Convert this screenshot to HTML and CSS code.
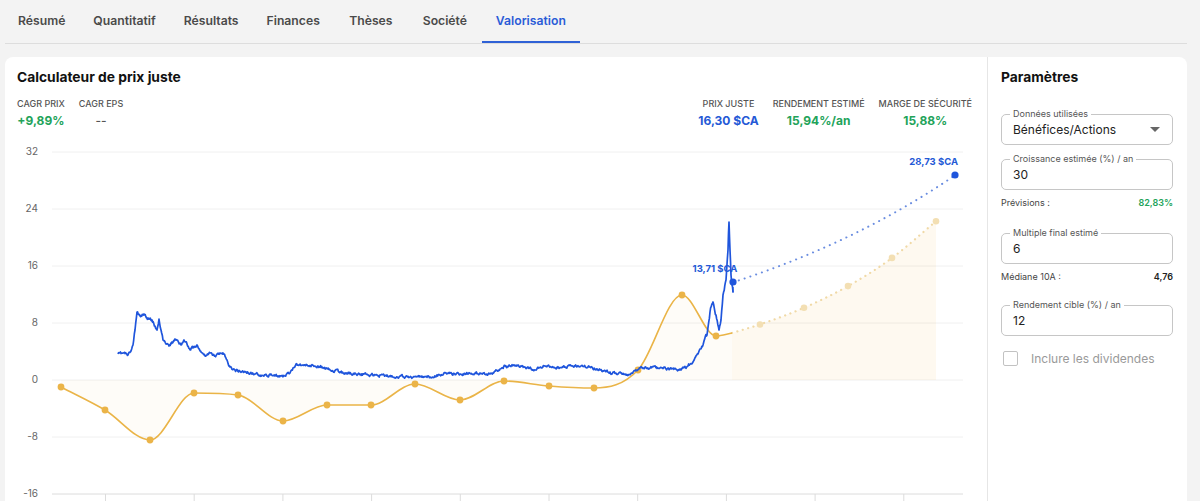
FILE: index.html
```html
<!DOCTYPE html>
<html>

<head>
    <title>Valorisation</title>
    <link rel="stylesheet" href="styles.css">
</head>

<body>
    <div class="page">
        <nav class="tabs">
            <a class="tab">Résumé</a>
            <a class="tab">Quantitatif</a>
            <a class="tab">Résultats</a>
            <a class="tab">Finances</a>
            <a class="tab">Thèses</a>
            <a class="tab">Société</a>
            <a class="tab active">Valorisation</a>
        </nav>

        <div class="card">
            <!-- Calculator + chart -->
            <section class="calc">
                <h2 class="title">Calculateur de prix juste</h2>

                <div class="stats">
                    <div class="stat-group">
                        <div class="stat">
                            <div class="stat-label">CAGR PRIX</div>
                            <div class="stat-value green">+9,89%</div>
                        </div>
                        <div class="stat">
                            <div class="stat-label">CAGR EPS</div>
                            <div class="stat-value muted">--</div>
                        </div>
                    </div>
                    <div class="stat-group">
                        <div class="stat">
                            <div class="stat-label">PRIX JUSTE</div>
                            <div class="stat-value blue">16,30 $CA</div>
                        </div>
                        <div class="stat">
                            <div class="stat-label">RENDEMENT ESTIMÉ</div>
                            <div class="stat-value green">15,94%/an</div>
                        </div>
                        <div class="stat">
                            <div class="stat-label">MARGE DE SÉCURITÉ</div>
                            <div class="stat-value green">15,88%</div>
                        </div>
                    </div>
                </div>

                <svg class="chart" width="955" height="370" viewBox="17 140 955 370">
                    <g class="grid">
                        <line x1="52" x2="963" y1="152" y2="152" />
                        <line x1="52" x2="963" y1="209" y2="209" />
                        <line x1="52" x2="963" y1="266" y2="266" />
                        <line x1="52" x2="963" y1="323" y2="323" />
                        <line x1="52" x2="963" y1="380" y2="380" />
                        <line x1="52" x2="963" y1="437" y2="437" />
                    </g>
                    <g class="axis-labels">
                        <text x="38" y="152">32</text>
                        <text x="38" y="209">24</text>
                        <text x="38" y="266">16</text>
                        <text x="38" y="323">8</text>
                        <text x="38" y="380">0</text>
                        <text x="38" y="437">-8</text>
                        <text x="38" y="494">-16</text>
                    </g>
                    <g class="x-axis" id="xAxis">
                        <line x1="52" x2="963" y1="494" y2="494" />
                    </g>

                    <path id="orangeArea" class="orange-area" />
                    <path id="projArea" class="proj-area" />
                    <path id="projLine" class="proj-line" />
                    <g id="projDots" class="proj-dots"></g>

                    <path id="orangeLine" class="orange-line" />
                    <g id="orangeDots" class="orange-dots"></g>

                    <path id="blueLine" class="blue-line" />
                    <path id="blueProj" class="blue-proj" />
                    <line class="blue-tick" x1="733" x2="733" y1="287" y2="293" />
                    <circle class="blue-dot" cx="733" cy="282" r="3.6" />
                    <circle class="blue-dot" cx="955" cy="175" r="3.6" />
                    <text class="point-label" x="715" y="272">13,71 $CA</text>
                    <text class="point-label end" x="958" y="165">28,73 $CA</text>
                </svg>
            </section>

            <!-- Parameters panel -->
            <aside class="params">
                <h2 class="title">Paramètres</h2>

                <div class="field first">
                    <span class="legend">Données utilisées</span>
                    <span class="field-value">Bénéfices/Actions</span>
                    <span class="caret"></span>
                </div>

                <div class="field">
                    <span class="legend">Croissance estimée (%) / an</span>
                    <span class="field-value">30</span>
                </div>
                <div class="info-row">
                    <span>Prévisions :</span>
                    <span class="green">82,83%</span>
                </div>

                <div class="field spaced">
                    <span class="legend">Multiple final estimé</span>
                    <span class="field-value">6</span>
                </div>
                <div class="info-row">
                    <span>Médiane 10A :</span>
                    <span class="dark">4,76</span>
                </div>

                <div class="field spaced last">
                    <span class="legend">Rendement cible (%) / an</span>
                    <span class="field-value">12</span>
                </div>

                <label class="check">
                    <span class="box"></span>
                    <span>Inclure les dividendes</span>
                </label>
            </aside>
        </div>
    </div>

    <script>
        const NS = "http://www.w3.org/2000/svg";
        const zeroY = 380;
        const unit = 7.125; // px per unit on the y axis

        // Fritsch-Carlson monotone cubic path
        function monotonePath(pts) {
            const n = pts.length;
            const m = [], t = [];
            for (let i = 0; i < n - 1; i++) {
                m.push((pts[i + 1][1] - pts[i][1]) / (pts[i + 1][0] - pts[i][0]));
            }
            t[0] = m[0];
            t[n - 1] = m[n - 2];
            for (let i = 1; i < n - 1; i++) {
                t[i] = m[i - 1] * m[i] <= 0 ? 0 : (m[i - 1] + m[i]) / 2;
            }
            for (let i = 0; i < n - 1; i++) {
                if (m[i] === 0) { t[i] = 0; t[i + 1] = 0; continue; }
                const a = t[i] / m[i], b = t[i + 1] / m[i], s = a * a + b * b;
                if (s > 9) {
                    const tau = 3 / Math.sqrt(s);
                    t[i] = tau * a * m[i];
                    t[i + 1] = tau * b * m[i];
                }
            }
            let d = "M" + pts[0][0] + "," + pts[0][1];
            for (let i = 0; i < n - 1; i++) {
                const h = (pts[i + 1][0] - pts[i][0]) / 3;
                d += " C" + (pts[i][0] + h) + "," + (pts[i][1] + t[i] * h) + " " +
                    (pts[i + 1][0] - h) + "," + (pts[i + 1][1] - t[i + 1] * h) + " " +
                    pts[i + 1][0] + "," + pts[i + 1][1];
            }
            return d;
        }

        function addDots(groupId, pts, r) {
            const g = document.getElementById(groupId);
            pts.forEach(p => {
                const c = document.createElementNS(NS, "circle");
                c.setAttribute("cx", p[0]);
                c.setAttribute("cy", p[1]);
                c.setAttribute("r", r);
                g.appendChild(c);
            });
        }

        // EPS history (orange)
        const eps = [[61, 387], [105, 410], [150, 440], [194, 393], [238, 395], [283, 421], [327, 405],
        [371, 405], [415, 384], [460, 400], [504, 381], [549, 386], [594, 388], [638, 370],
        [682, 295], [716, 336]];
        const epsLine = eps.concat([[732, 333]]);
        const epsPath = monotonePath(epsLine);
        document.getElementById("orangeLine").setAttribute("d", epsPath);
        document.getElementById("orangeArea").setAttribute("d", epsPath + " L732,380 L61,380 Z");
        addDots("orangeDots", eps, 3.4);

        // EPS projection
        const proj = [[732, 333]];
        [760, 804, 848, 892, 936].forEach((x, i) => {
            proj.push([x, zeroY - 6 * Math.pow(1.3, i + 1) * unit]);
        });
        const projPath = monotonePath(proj);
        document.getElementById("projLine").setAttribute("d", projPath);
        document.getElementById("projArea").setAttribute("d", projPath + " L936,380 L732,380 Z");
        addDots("projDots", proj.slice(1), 3.3);

        // price history (blue), noisy line through key points
        const keys = [[118, 354], [124, 353], [128, 355], [131, 351], [133, 345], [135, 330], [137, 312],
        [140, 316], [144, 314], [148, 318], [152, 320], [155, 326], [157, 330], [159, 319], [161, 330],
        [163, 340], [166, 344], [169, 346], [172, 342], [175, 339], [178, 341], [181, 345], [184, 340],
        [187, 344], [190, 350], [193, 348], [197, 345], [200, 351], [205, 356], [210, 353], [215, 356],
        [220, 353], [224, 354], [227, 360], [230, 367], [235, 370], [245, 372], [255, 374], [265, 375],
        [275, 376], [285, 376], [290, 373], [293, 368], [296, 364], [305, 365], [315, 366], [320, 367],
        [330, 370], [345, 373], [360, 374], [375, 375], [390, 376], [410, 377], [430, 377], [440, 375],
        [445, 373], [460, 374], [480, 373], [490, 374], [500, 369], [505, 366], [515, 366], [525, 367],
        [535, 370], [545, 366], [555, 368], [565, 367], [575, 366], [590, 367], [600, 370], [610, 372],
        [625, 374], [632, 373], [640, 368], [660, 368], [680, 370], [688, 366], [693, 362], [698, 354],
        [703, 345], [707, 335], [710, 312], [713, 302], [716, 315], [719, 330], [721, 320], [723, 295],
        [726, 280], [728, 250], [729, 222], [730, 250], [731, 275], [732, 285], [733, 292]];

        let seed = 11;
        function rnd() {
            seed = (seed * 16807) % 2147483647;
            return seed / 2147483647;
        }

        let d = "M" + keys[0][0] + "," + keys[0][1];
        let walk = 0;
        for (let i = 0; i < keys.length - 1; i++) {
            const [x0, y0] = keys[i], [x1, y1] = keys[i + 1];
            const steps = Math.max(1, Math.round((x1 - x0) / 0.6));
            for (let s = 1; s <= steps; s++) {
                const f = s / steps;
                walk = walk * 0.55 + (rnd() - 0.5) * 2.4;
                const amp = x0 > 700 ? 1.6 : 1;
                const y = y0 + (y1 - y0) * f + (s === steps ? 0 : walk * amp);
                d += " L" + (x0 + (x1 - x0) * f).toFixed(2) + "," + y.toFixed(2);
            }
        }
        document.getElementById("blueLine").setAttribute("d", d);

        // fair value projection (blue dotted)
        let bp = "";
        for (let k = 0; k <= 60; k++) {
            const f = k / 60;
            const x = 733 + (955 - 733) * f;
            const y = zeroY - 13.71 * Math.pow(28.73 / 13.71, f) * unit;
            bp += (k === 0 ? "M" : " L") + x.toFixed(2) + "," + y.toFixed(2);
        }
        document.getElementById("blueProj").setAttribute("d", bp);

        // x axis ticks
        const axis = document.getElementById("xAxis");
        for (let i = 0; i < 10; i++) {
            const x = 105.5 + i * 88.7;
            const l = document.createElementNS(NS, "line");
            l.setAttribute("x1", x);
            l.setAttribute("x2", x);
            l.setAttribute("y1", 494);
            l.setAttribute("y2", 501);
            axis.appendChild(l);
        }
    </script>
</body>

</html>
```

FILE: styles.css
```css
body {
    margin: 0;
    background-color: #f3f3f3;
    font-family: Inter, "Noto Sans", sans-serif;
    color: #222;
}

.page {
    padding: 0 13px 0 5px;
}

/* Tabs */
.tabs {
    display: flex;
    border-bottom: 1px solid #dddddd;
}

.tab {
    min-width: 74px;
    box-sizing: border-box;
    text-align: center;
    padding: 12px 14px 12px;
    line-height: 17px;
    font-size: 12.2px;
    font-weight: 600;
    color: #4a4a4a;
    border-bottom: 2px solid transparent;
    cursor: pointer;
}

.tab:first-child {
    padding-left: 13px;
}

.tab.active {
    color: #2a5bd7;
    border-bottom-color: #2f61d6;
}

/* Card */
.card {
    display: flex;
    margin-top: 13px;
    background-color: #fff;
    border-radius: 8px;
    min-height: 460px;
}

.calc {
    flex: 1;
    padding: 10px 15px 0 12px;
}

.title {
    margin: 0;
    font-size: 13.8px;
    line-height: 20px;
    font-weight: 700;
    color: #111;
}

.stats {
    display: flex;
    justify-content: space-between;
    margin-top: 11px;
}

.stat-group {
    display: flex;
    gap: 14px;
}

.stat {
    text-align: center;
}

.stat-label {
    font-size: 9px;
    line-height: 12px;
    font-weight: 500;
    color: #555;
    margin-bottom: 3px;
}

.stat-value {
    font-size: 12px;
    line-height: 16px;
    font-weight: 700;
}

.green {
    color: #22a35a;
}

.blue {
    color: #2459d6;
}

.muted {
    color: #555;
    font-weight: 500;
}

.dark {
    color: #222;
    font-weight: 600;
}

/* Chart */
.chart {
    display: block;
    margin-top: 11px;
    overflow: visible;
}

.grid line {
    stroke: #f0f0f0;
    stroke-width: 1;
}

.x-axis line {
    stroke: #dcdcdc;
    stroke-width: 1;
}

.axis-labels text {
    font-family: Inter, sans-serif;
    font-size: 10px;
    fill: #666;
    text-anchor: end;
    dominant-baseline: middle;
}

.orange-area {
    fill: rgba(236, 180, 70, 0.035);
}

.proj-area {
    fill: rgba(236, 180, 70, 0.08);
}

.orange-line {
    fill: none;
    stroke: #eab447;
    stroke-width: 1.6;
}

.orange-dots circle {
    fill: #ebb448;
}

.proj-line {
    fill: none;
    stroke: #f0d9a6;
    stroke-width: 2.2;
    stroke-linecap: round;
    stroke-dasharray: 0.1 5.5;
}

.proj-dots circle {
    fill: #f3dfb3;
}

.blue-line {
    fill: none;
    stroke: #1f55dc;
    stroke-width: 1.7;
    stroke-linejoin: round;
}

.blue-proj {
    fill: none;
    stroke: #6a8de0;
    stroke-width: 2;
    stroke-linecap: round;
    stroke-dasharray: 0.1 6;
}

.blue-tick {
    stroke: #1f55dc;
    stroke-width: 1.2;
}

.blue-dot {
    fill: #1f55dc;
}

.point-label {
    font-family: Inter, sans-serif;
    font-size: 9.5px;
    font-weight: 700;
    fill: #2459d6;
    text-anchor: middle;
}

.point-label.end {
    text-anchor: end;
}

/* Parameters */
.params {
    width: 186px;
    border-left: 1px solid #e6e6e6;
    padding: 10px 14px 0 13px;
}

.field {
    position: relative;
    display: flex;
    align-items: center;
    height: 29px;
    border: 1px solid #c6c6c6;
    border-radius: 5px;
    padding: 0 11px;
    margin-top: 14px;
}

.field.first {
    margin-top: 27px;
}

.field.spaced {
    margin-top: 24px;
}

.field.last {
    margin-top: 22px;
}

.legend {
    position: absolute;
    top: -7px;
    left: 8px;
    padding: 0 3px;
    background-color: #fff;
    font-size: 9px;
    line-height: 12px;
    color: #555;
}

.field-value {
    font-size: 12px;
    color: #222;
    flex: 1;
}

.caret {
    width: 0;
    height: 0;
    border-left: 5px solid transparent;
    border-right: 5px solid transparent;
    border-top: 5px solid #666;
    margin-right: 1px;
}

.info-row {
    display: flex;
    justify-content: space-between;
    margin-top: 7px;
    font-size: 9px;
    line-height: 12px;
    color: #444;
}

.info-row .green {
    font-weight: 600;
}

.check {
    display: flex;
    align-items: center;
    gap: 13px;
    margin-top: 15px;
    padding-left: 2px;
    font-size: 12px;
    color: #9a9a9a;
}

.box {
    width: 13px;
    height: 13px;
    border: 1.5px solid #c2c2c2;
    border-radius: 2px;
}
```
